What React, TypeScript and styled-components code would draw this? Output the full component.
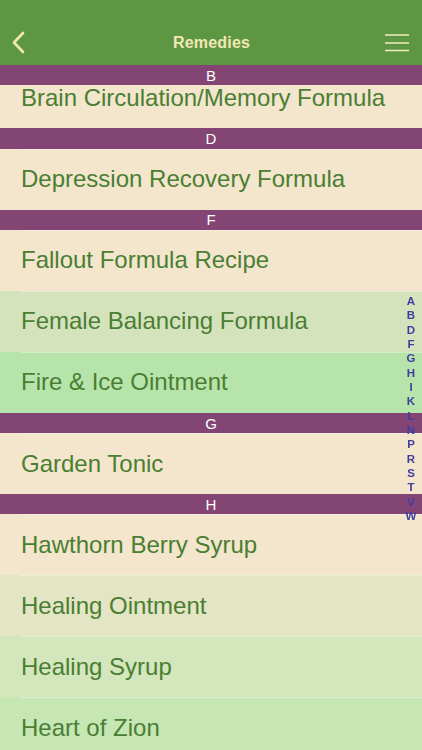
import React, { useEffect, useRef } from "react";
import { FC } from "react";
import styled, { createGlobalStyle } from "styled-components";

const GlobalStyle = createGlobalStyle`
    html, body {
        margin: 0;
        padding: 0;
        overflow: hidden;
        font-family: "Liberation Sans", Arial, sans-serif;
    }
`;

const Screen = styled.div`
    width: 422px;
    height: 750px;
    display: flex;
    flex-direction: column;
    position: relative;
    background-color: #f3e6cc;
`;

const NavBar = styled.div`
    background-color: #5d9744;
    height: 65px;
    padding-top: 20px;
    box-sizing: border-box;
    display: flex;
    align-items: center;
    justify-content: space-between;
    padding-left: 10px;
    padding-right: 13px;
    flex-shrink: 0;
`;

const Title = styled.div`
    color: #f2e8b4;
    font-size: 16px;
    font-weight: bold;
    letter-spacing: 0.2px;
    margin-left: 4px;
`;

const IconButton = styled.div<{ $align: string }>`
    width: 24px;
    height: 24px;
    display: flex;
    align-items: center;
    justify-content: ${(p) => p.$align};
`;

const List = styled.div`
    flex: 1;
    overflow-y: auto;
    scrollbar-width: none;
    &::-webkit-scrollbar {
        display: none;
    }
`;

const SectionHeader = styled.div`
    position: sticky;
    top: 0;
    z-index: 1;
    height: 20.3px;
    background-color: #834573;
    color: #ffffff;
    font-size: 15px;
    display: flex;
    align-items: center;
    justify-content: center;
`;

const Row = styled.div<{ $tint: string }>`
    height: 61px;
    background-color: ${(p) => p.$tint};
    display: flex;
    align-items: center;
    padding-left: 21px;
    color: #4a7e33;
    font-size: 24px;
    position: relative;
    &:not(:first-of-type)::before {
        content: "";
        position: absolute;
        top: 0;
        left: 21px;
        right: 0;
        height: 1px;
        background-color: rgba(255, 255, 255, 0.35);
    }
`;

const IndexBar = styled.div`
    position: absolute;
    right: 3px;
    top: 294px;
    width: 16px;
    display: flex;
    flex-direction: column;
    align-items: center;
    z-index: 2;
`;

const IndexLetter = styled.div`
    color: #3f3e9e;
    font-size: 11.5px;
    font-weight: bold;
    line-height: 14.35px;
`;

type Section = { letter: string; items: { name: string; tint: string }[] };

const BEIGE = "#f3e6cc";

const sections: Section[] = [
    { letter: "B", items: [{ name: "Brain Circulation/Memory Formula", tint: BEIGE }] },
    { letter: "D", items: [{ name: "Depression Recovery Formula", tint: BEIGE }] },
    {
        letter: "F",
        items: [
            { name: "Fallout Formula Recipe", tint: BEIGE },
            { name: "Female Balancing Formula", tint: "#d5e3bd" },
            { name: "Fire & Ice Ointment", tint: "#b6e4aa" }
        ]
    },
    { letter: "G", items: [{ name: "Garden Tonic", tint: BEIGE }] },
    {
        letter: "H",
        items: [
            { name: "Hawthorn Berry Syrup", tint: BEIGE },
            { name: "Healing Ointment", tint: "#e4e5c4" },
            { name: "Healing Syrup", tint: "#d4e6bc" },
            { name: "Heart of Zion", tint: "#c6e6b4" }
        ]
    }
];

const indexLetters = ["A", "B", "D", "F", "G", "H", "I", "K", "L", "N", "P", "R", "S", "T", "V", "W"];

const App: FC = () => {
    const listRef = useRef<HTMLDivElement>(null);

    useEffect(() => {
        if (listRef.current) {
            listRef.current.scrollTop = 17.5;
        }
    }, []);

    return (
        <Screen>
            <GlobalStyle />
            <NavBar>
                <IconButton $align="flex-start">
                    <svg width="16" height="24" viewBox="0 0 16 24">
                        <path d="M13 2 L4 11.5 L13 21" fill="none" stroke="#f2e8b4" strokeWidth="2.6" strokeLinecap="round" strokeLinejoin="round" />
                    </svg>
                </IconButton>
                <Title>Remedies</Title>
                <IconButton $align="flex-end">
                    <svg width="24" height="20" viewBox="0 0 24 20">
                        <path d="M0 2 H24 M0 10 H24 M0 17.5 H24" stroke="#f2ebc0" strokeWidth="1.6" />
                    </svg>
                </IconButton>
            </NavBar>
            <List ref={listRef}>
                {sections.map((section) => (
                    <div key={section.letter}>
                        <SectionHeader>{section.letter}</SectionHeader>
                        {section.items.map((item) => (
                            <Row key={item.name} $tint={item.tint}>
                                {item.name}
                            </Row>
                        ))}
                    </div>
                ))}
            </List>
            <IndexBar>
                {indexLetters.map((l) => (
                    <IndexLetter key={l}>{l}</IndexLetter>
                ))}
            </IndexBar>
        </Screen>
    );
};

export default App;
